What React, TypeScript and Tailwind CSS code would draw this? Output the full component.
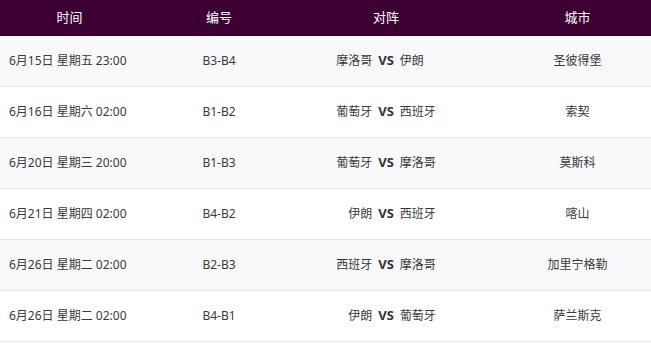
import React from "react";

const rows = [
  { time: "6月15日 星期五 23:00", code: "B3-B4", home: "摩洛哥", away: "伊朗", city: "圣彼得堡" },
  { time: "6月16日 星期六 02:00", code: "B1-B2", home: "葡萄牙", away: "西班牙", city: "索契" },
  { time: "6月20日 星期三 20:00", code: "B1-B3", home: "葡萄牙", away: "摩洛哥", city: "莫斯科" },
  { time: "6月21日 星期四 02:00", code: "B4-B2", home: "伊朗", away: "西班牙", city: "喀山" },
  { time: "6月26日 星期二 02:00", code: "B2-B3", home: "西班牙", away: "摩洛哥", city: "加里宁格勒" },
  { time: "6月26日 星期二 02:00", code: "B4-B1", home: "伊朗", away: "葡萄牙", city: "萨兰斯克" },
];

export default function App() {
  return (
    <div
      className="w-[651px] h-[350px] bg-white text-[12px] text-[#3a3a3a]"
      style={{ fontFamily: '"Noto Sans", "Noto Sans CJK SC", sans-serif' }}
    >
      <div className="grid grid-cols-[139px_160px_174px_1fr] h-[36px] items-center bg-[#3d0033] text-white text-[13px]">
        <div className="text-center">时间</div>
        <div className="text-center">编号</div>
        <div className="text-center">对阵</div>
        <div className="text-center pl-[31px]">城市</div>
      </div>
      {rows.map((r, i) => (
        <div
          key={i}
          className={
            "grid grid-cols-[139px_160px_174px_1fr] h-[51px] items-center border-b border-[#e6e6e6] " +
            (i % 2 === 0 ? "bg-[#f8f9fb]" : "bg-white")
          }
        >
          <div className="pl-[9px] whitespace-nowrap">{r.time}</div>
          <div className="text-center">{r.code}</div>
          <div className="grid grid-cols-[1fr_auto_1fr] gap-x-[6px] items-center">
            <div className="text-right">{r.home}</div>
            <div className="font-bold text-[13px] text-[#333]">VS</div>
            <div className="text-left">{r.away}</div>
          </div>
          <div className="text-center pl-[31px]">{r.city}</div>
        </div>
      ))}
    </div>
  );
}
